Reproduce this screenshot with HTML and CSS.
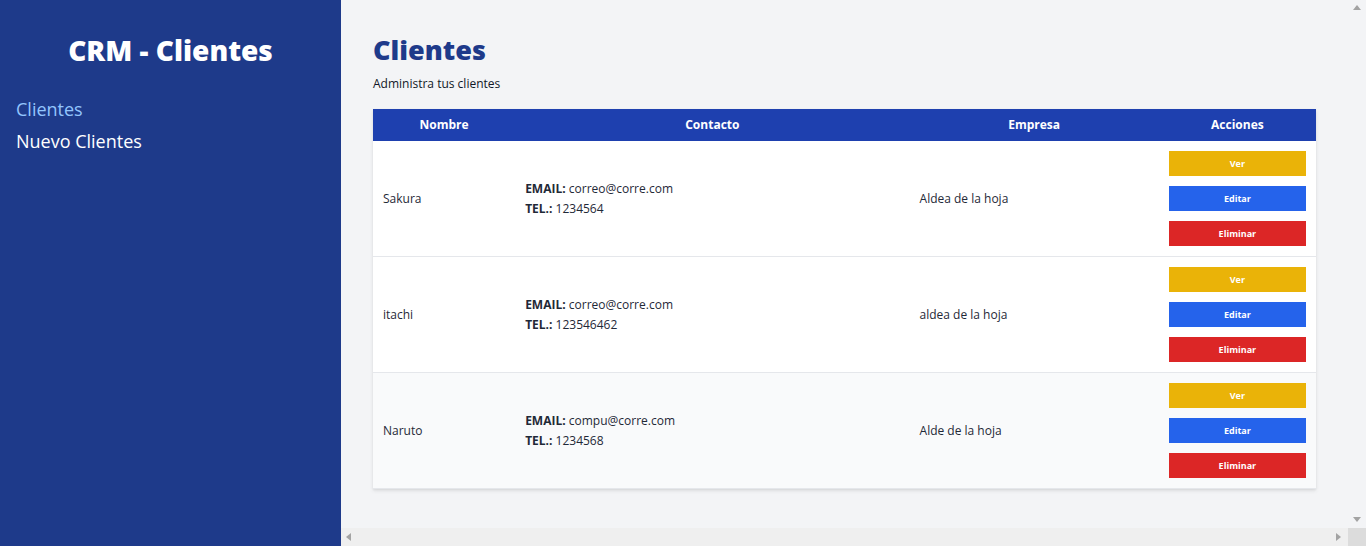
FILE: index.html
```html
<!DOCTYPE html>
<html lang="es">
<head>
<meta charset="utf-8">
<title>CRM - Clientes</title>
<link rel="stylesheet" href="styles.css">
</head>
<body>
<div class="layout">
  <aside class="sidebar">
    <h2 class="brand">CRM - Clientes</h2>
    <nav class="nav">
      <a class="nav-link active" href="#">Clientes</a>
      <a class="nav-link" href="#">Nuevo Clientes</a>
    </nav>
  </aside>
  <div class="viewport">
    <main class="main">
      <h1 class="title">Clientes</h1>
      <p class="subtitle">Administra tus clientes</p>
      <table class="table">
        <colgroup>
          <col class="c-nombre"><col class="c-contacto"><col class="c-empresa"><col class="c-acciones">
        </colgroup>
        <thead>
          <tr><th>Nombre</th><th>Contacto</th><th>Empresa</th><th>Acciones</th></tr>
        </thead>
        <tbody>
          <tr>
            <td>Sakura</td>
            <td><p class="contact"><b>EMAIL:</b> correo@corre.com</p><p class="contact"><b>TEL.:</b> 1234564</p></td>
            <td>Aldea de la hoja</td>
            <td class="actions"><a class="btn btn-ver" href="#">Ver</a><a class="btn btn-edit" href="#">Editar</a><a class="btn btn-del" href="#">Eliminar</a></td>
          </tr>
          <tr>
            <td>itachi</td>
            <td><p class="contact"><b>EMAIL:</b> correo@corre.com</p><p class="contact"><b>TEL.:</b> 123546462</p></td>
            <td>aldea de la hoja</td>
            <td class="actions"><a class="btn btn-ver" href="#">Ver</a><a class="btn btn-edit" href="#">Editar</a><a class="btn btn-del" href="#">Eliminar</a></td>
          </tr>
          <tr class="alt">
            <td>Naruto</td>
            <td><p class="contact"><b>EMAIL:</b> compu@corre.com</p><p class="contact"><b>TEL.:</b> 1234568</p></td>
            <td>Alde de la hoja</td>
            <td class="actions"><a class="btn btn-ver" href="#">Ver</a><a class="btn btn-edit" href="#">Editar</a><a class="btn btn-del" href="#">Eliminar</a></td>
          </tr>
        </tbody>
      </table>
    </main>
    <div class="vbar"><span class="arrow arrow-up"></span><span class="arrow arrow-down"></span></div>
    <div class="hbar"><span class="arrow arrow-left"></span><span class="arrow arrow-right"></span></div>
    <div class="corner"></div>
  </div>
</div>
</body>
</html>
```
FILE: styles.css
```css
* { box-sizing: border-box; }
html, body { margin: 0; height: 100%; }
body {
  font-family: "Open Sans", "Noto Sans", sans-serif;
  color: #1f2937;
  overflow: hidden;
}
.layout { display: flex; height: 546px; }
.sidebar {
  width: 341px;
  flex: none;
  background: #1e3a8a;
  padding: 32px 16px;
}
.brand {
  margin: 0;
  color: #fff;
  text-align: center;
  font-size: 28px;
  font-weight: 800;
  line-height: 36px;
}
.nav { display: flex; flex-direction: column; margin-top: 25px; }
.nav-link {
  color: #fff;
  text-decoration: none;
  font-size: 18px;
  line-height: 32px;
}
.nav-link.active { color: #93c5fd; }

.viewport {
  flex: 1;
  display: grid;
  grid-template-columns: 1fr 18px;
  grid-template-rows: 1fr 18px;
  background: #f3f4f6;
  min-width: 0;
}
.main {
  padding: 32px;
  overflow: hidden;
  min-width: 0;
}
.title {
  margin: 0;
  font-size: 27px;
  line-height: 36px;
  font-weight: 800;
  color: #1e3a8a;
}
.subtitle {
  margin: 7px 0 16px;
  font-size: 12px;
  line-height: 18px;
  color: #111827;
}
.table {
  width: 100%;
  table-layout: fixed;
  border-collapse: collapse;
  background: #fff;
  box-shadow: 0 2px 4px rgba(0,0,0,0.08), 0 1px 2px rgba(0,0,0,0.06);
}
.c-nombre { width: 142px; }
.c-contacto { width: 394px; }
.c-empresa { width: 249px; }
.c-acciones { width: 157px; }
thead tr { background: #1e40af; }
th {
  color: #fff;
  font-size: 12px;
  font-weight: 700;
  line-height: 16px;
  padding: 8px 10px;
  text-align: center;
}
td {
  font-size: 12px;
  line-height: 20px;
  padding: 10px 10px;
  vertical-align: middle;
  color: #1f2937;
}
tbody tr { border-bottom: 1px solid #e5e7eb; }
tbody tr.alt { background: #f9fafb; }
.contact { margin: 0; }
.contact b { font-weight: 700; }
.btn {
  display: block;
  height: 25px;
  line-height: 25px;
  text-align: center;
  color: #fff;
  text-decoration: none;
  font-size: 9px;
  font-weight: 700;
}
.btn + .btn { margin-top: 10px; }
.btn-ver { background: #eab308; }
.btn-edit { background: #2563eb; }
.btn-del { background: #dc2626; }

.vbar {
  display: flex;
  flex-direction: column;
  justify-content: space-between;
  align-items: center;
  padding: 5px 0 6px;
}
.hbar {
  background: #efefef;
  display: flex;
  justify-content: space-between;
  align-items: center;
  padding: 0 7px 0 5px;
}
.corner { background: #dcdcdc; }
.arrow { width: 0; height: 0; display: block; }
.arrow-up { border-left: 4px solid transparent; border-right: 4px solid transparent; border-bottom: 5px solid #a3a3a3; }
.arrow-down { border-left: 4px solid transparent; border-right: 4px solid transparent; border-top: 5px solid #a3a3a3; }
.arrow-left { border-top: 4px solid transparent; border-bottom: 4px solid transparent; border-right: 5px solid #a3a3a3; }
.arrow-right { border-top: 4px solid transparent; border-bottom: 4px solid transparent; border-left: 5px solid #a3a3a3; }
```
